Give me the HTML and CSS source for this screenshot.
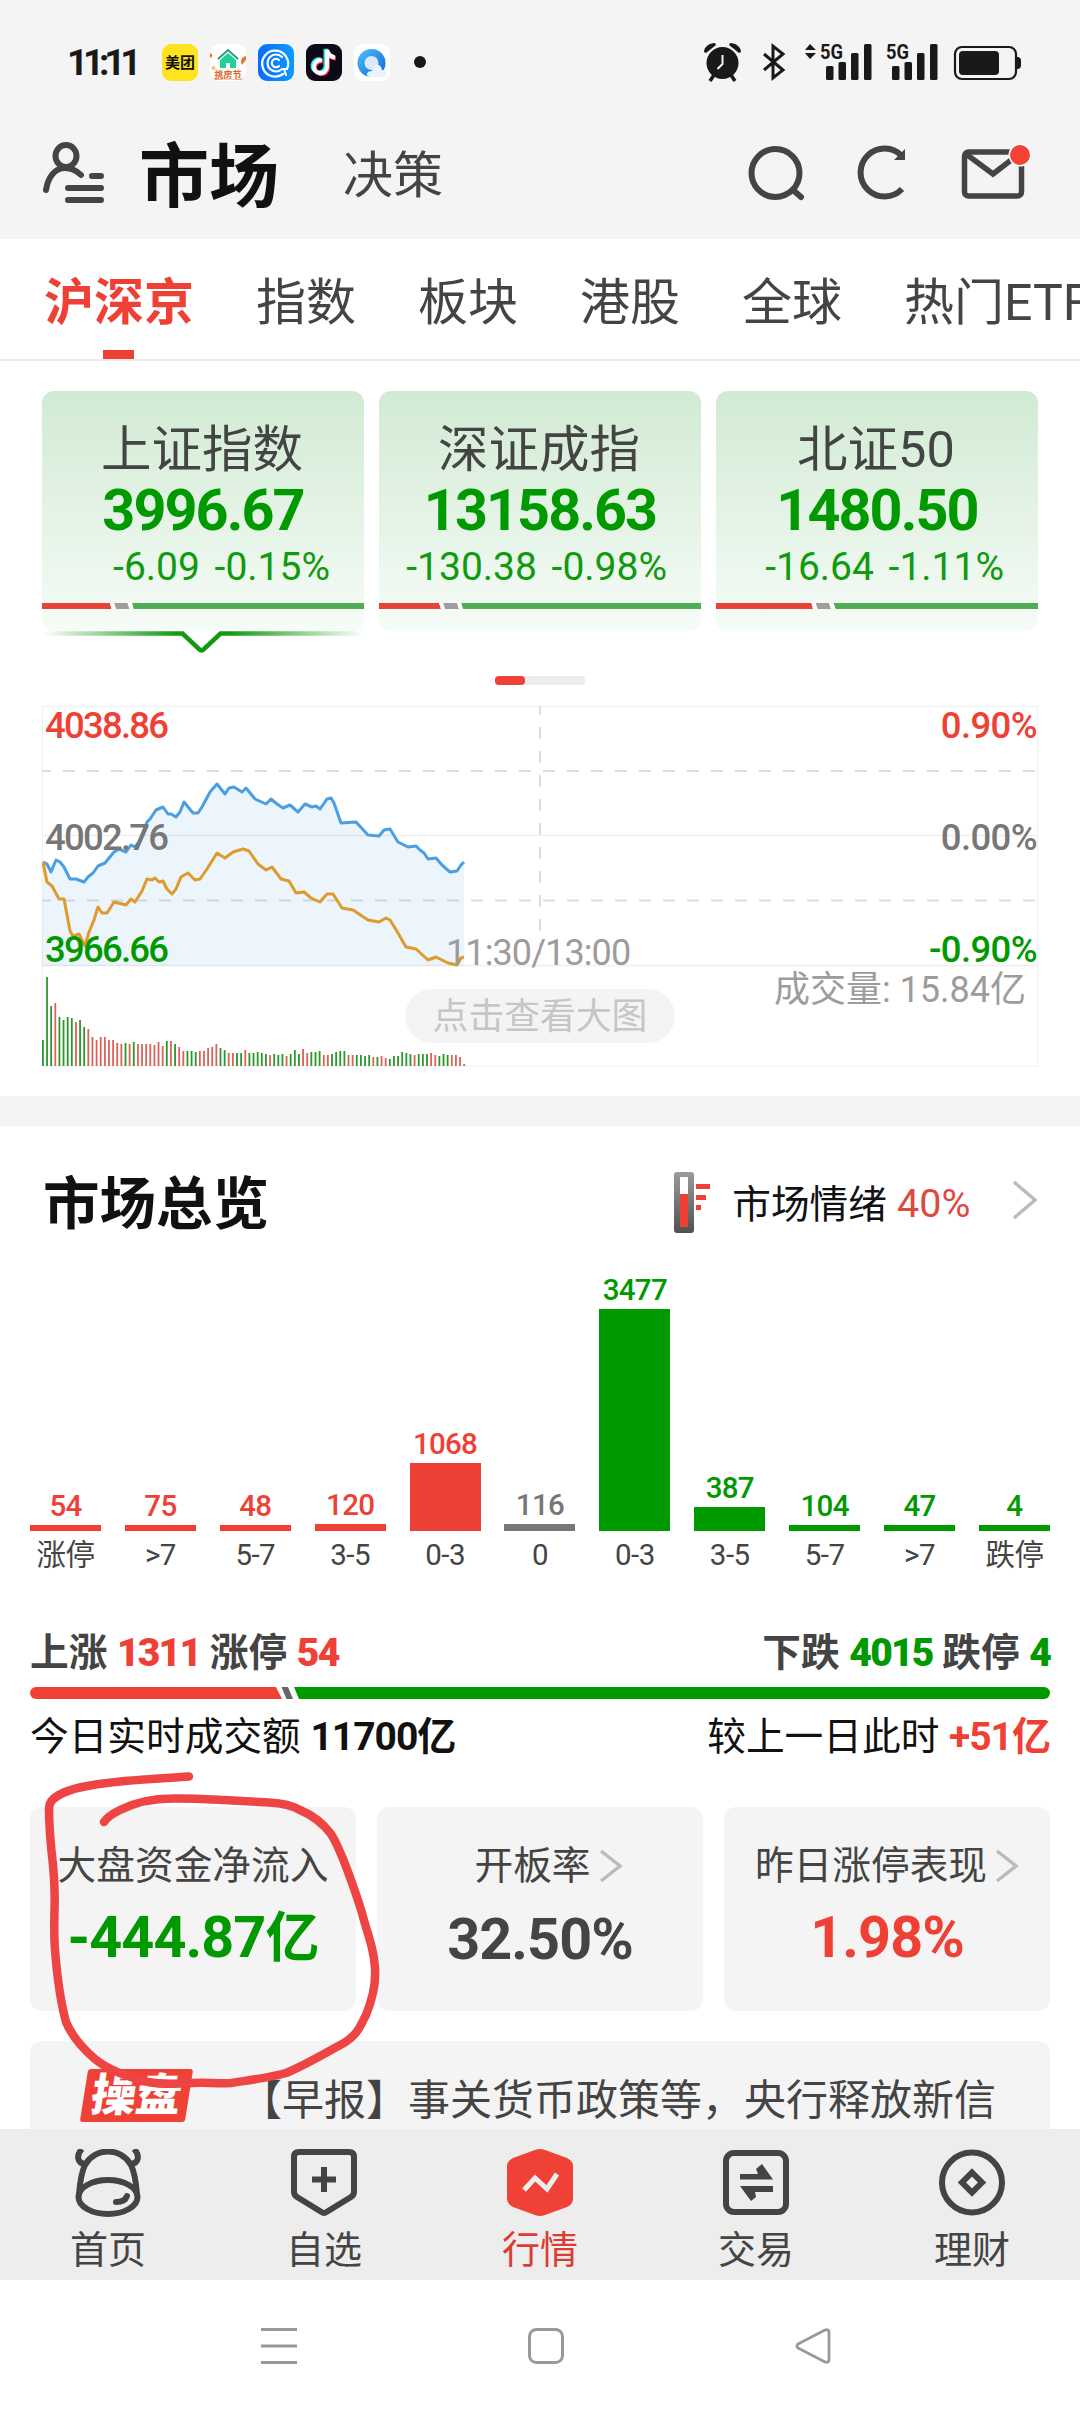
FILE: index.html
```html
<!DOCTYPE html>
<html lang="zh-CN">
<head>
    <meta charset="UTF-8">
    <meta name="viewport" content="width=device-width, initial-scale=1.0">
    <title>市场</title>
    <link rel="stylesheet" href="styles.css">
</head>
<body>

<!-- Status bar -->
<div class="status-bar">
    <span class="clock">11:11</span>
    <div class="app-icons">
        <span class="app app-meituan">美团</span>
        <span class="app app-house">
            <svg viewBox="0 0 36 37" width="36" height="37">
                <path d="M8 15L18 6l10 9" fill="none" stroke="#2a9d7c" stroke-width="2"/>
                <path d="M10 16l8-7 8 7v8h-6v-5h-4v5h-6z" fill="#20cf9a"/>
                <circle cx="3.500" cy="24" r="2" fill="#ffc069"/>
                <path d="M0 9c3 1 3 4 0 5z" fill="#e8792c"/>
                <path d="M36 12c-5 1-6 5-4 9l4-5z" fill="#e8792c"/>
                <path d="M3 34c8 2 22 2 30 0v2H5z" fill="#f0a36a"/>
                <text x="18" y="34" text-anchor="middle" class="house-text">挑房节</text>
            </svg>
        </span>
        <span class="app app-query">
            <svg viewBox="0 0 36 37" width="36" height="37" fill="none" stroke="#fff" stroke-width="2.200" stroke-linecap="round">
                <path d="M25 30a13 13 0 1 1 4-5l-3 0l2 6"/>
                <path d="M24 25a8.500 8.500 0 1 1 0-12"/>
                <path d="M21 22a4.200 4.200 0 1 1 0-6"/>
            </svg>
        </span>
        <span class="app app-music">
            <svg viewBox="0 0 36 37" width="36" height="37" fill="none" stroke-width="4">
                <path d="M16 16.500a6.500 6.500 0 1 0 5 6.500V6c1 5 4 7 8 7.500" stroke="#2af0ea" transform="translate(-1.500 -1)"/>
                <path d="M16 16.500a6.500 6.500 0 1 0 5 6.500V6c1 5 4 7 8 7.500" stroke="#fe2c55" transform="translate(1 1)"/>
                <path d="M16 16.500a6.500 6.500 0 1 0 5 6.500V6c1 5 4 7 8 7.500" stroke="#fff"/>
            </svg>
        </span>
        <span class="app app-browser">
            <svg viewBox="0 0 36 37" width="36" height="37">
                <defs>
                    <linearGradient id="ring" x1="0" x2="1" y1="0" y2="1">
                        <stop offset="0" stop-color="#45b6f5"/>
                        <stop offset="1" stop-color="#1273dc"/>
                    </linearGradient>
                </defs>
                <circle cx="17.500" cy="19" r="10.500" fill="#dbe9f8" stroke="url(#ring)" stroke-width="7"/>
                <path d="M16 33c-5-1-4-6 2-6 1-8 9-8 10-1 6 0 6 6 2 7z" fill="#e9f3fd"/>
            </svg>
        </span>
    </div>
    <span class="status-dot"></span>
    <svg class="status-icons" viewBox="700 40 324 44" width="324" height="44" fill="#191919">
        <!-- alarm -->
        <circle cx="722.500" cy="63" r="16"/>
        <path d="M704 52c0-5 5-9 11-9l1 2-10 8zM741 52c0-5-5-9-11-9l-1 2 10 8z"/>
        <path d="M714 75l-4 6M731 75l4 6" stroke="#191919" stroke-width="3.500"/>
        <path d="M722.500 55v9l-5 5" fill="none" stroke="#f4f4f4" stroke-width="2"/>
        <!-- bluetooth -->
        <path d="M764 54l19 16-10 8V46l10 8-19 16" fill="none" stroke="#191919" stroke-width="3"/>
        <!-- signals -->
        <path d="M805 50l5-6 6 6zM805 53l5 6 6-6z"/>
        <text x="820" y="59" class="net" textLength="23" lengthAdjust="spacingAndGlyphs">5G</text>
        <rect x="826" y="66" width="7.500" height="14" rx="1.500"/>
        <rect x="838.500" y="62" width="7.500" height="18" rx="1.500"/>
        <rect x="851" y="53" width="7.500" height="27" rx="1.500"/>
        <rect x="864" y="44" width="7.500" height="36" rx="1.500"/>
        <text x="886" y="59" class="net" textLength="23" lengthAdjust="spacingAndGlyphs">5G</text>
        <rect x="892" y="66" width="7.500" height="14" rx="1.500"/>
        <rect x="904.500" y="62" width="7.500" height="18" rx="1.500"/>
        <rect x="917" y="53" width="7.500" height="27" rx="1.500"/>
        <rect x="930" y="44" width="7.500" height="36" rx="1.500"/>
        <!-- battery -->
        <rect x="955" y="47" width="61" height="32" rx="7" fill="none" stroke="#191919" stroke-width="2.200"/>
        <rect x="959" y="51" width="40" height="24" rx="4"/>
        <path d="M1017 57h1.500q2.500 1 2.500 3v6q0 2-2.500 3H1017z"/>
    </svg>
</div>

<!-- Header -->
<header class="header">
    <svg class="contact" viewBox="0 0 62 64" width="62" height="64" fill="none" stroke="#444" stroke-width="6" stroke-linecap="round">
        <ellipse cx="23" cy="15" rx="10.500" ry="11"/>
        <path d="M3 49C5 36 12 27 22 27c8 0 13 4 16 7M49 35h9M25 47h33M25 59h33"/>
    </svg>
    <h1>市场</h1>
    <span class="decision">决策</span>
    <div class="header-icons">
        <svg viewBox="0 0 58 58" width="58" height="58" fill="none" stroke="#444" stroke-width="6">
            <circle cx="28.500" cy="29" r="24"/>
            <path d="M46 46l8 7" stroke-linecap="round"/>
        </svg>
        <svg viewBox="0 0 58 58" width="58" height="58" fill="none" stroke="#444" stroke-width="6">
            <path d="M46 45A24 24 0 1 1 46 12"/>
            <path d="M49 5v11H38z" fill="#444" stroke="none"/>
        </svg>
        <svg viewBox="0 0 72 58" width="72" height="58" fill="none" stroke="#444" stroke-width="5.500">
            <rect x="5.500" y="8" width="57" height="44" rx="4"/>
            <path d="M7 10l27 20 26-20"/>
            <circle cx="61" cy="11" r="11.500" fill="#fff" stroke="none"/>
            <circle cx="61" cy="11" r="10" fill="#f44336" stroke="none"/>
        </svg>
    </div>
</header>

<!-- Market tabs -->
<nav class="tabs">
    <span class="tab active">沪深京</span>
    <span class="tab">指数</span>
    <span class="tab">板块</span>
    <span class="tab">港股</span>
    <span class="tab">全球</span>
    <span class="tab">热门ETF</span>
</nav>

<!-- Index cards -->
<section class="index-cards">
    <div class="index-card">
        <div class="name">上证指数</div>
        <div class="value">3996.67</div>
        <div class="change">-6.09 <span>-0.15%</span></div>
        <svg class="ratio" viewBox="0 0 322 6" width="322" height="6">
            <path d="M0 0h68l1.500 6H0z" fill="#e94335"/>
            <path d="M72 0h13.500l2 6H74z" fill="#9e9e9e"/>
            <path d="M90 0h232v6H91.500z" fill="#51ad55"/>
            <path d="M68 0h4l2 6h-4.500zM85.500 0H90l1.500 6h-4z" fill="#fff"/>
        </svg>
        <svg class="pointer" viewBox="0 0 322 24" width="322" height="24">
            <defs>
                <linearGradient id="fade" x1="0" x2="322" y1="0" y2="0" gradientUnits="userSpaceOnUse">
                    <stop offset="0" stop-color="#109a10" stop-opacity="0"/>
                    <stop offset=".42" stop-color="#109a10"/>
                    <stop offset=".58" stop-color="#109a10"/>
                    <stop offset="1" stop-color="#109a10" stop-opacity="0"/>
                </linearGradient>
            </defs>
            <path d="M0 2.500h140.500L158 19q1.500 1 3 0l17.500-16.500H322" fill="none" stroke="url(#fade)" stroke-width="4.500"/>
        </svg>
    </div>
    <div class="index-card">
        <div class="name">深证成指</div>
        <div class="value">13158.63</div>
        <div class="change">-130.38 <span>-0.98%</span></div>
        <svg class="ratio" viewBox="0 0 322 6" width="322" height="6">
            <path d="M0 0h60l2 6H0z" fill="#e94335"/>
            <path d="M64 0h14l2 6H66z" fill="#9e9e9e"/>
            <path d="M82 0h240v6H84z" fill="#51ad55"/>
            <path d="M60 0h4l2 6h-4zM78 0h4l2 6h-4z" fill="#fff"/>
        </svg>
    </div>
    <div class="index-card">
        <div class="name">北证50</div>
        <div class="value">1480.50</div>
        <div class="change">-16.64 <span>-1.11%</span></div>
        <svg class="ratio" viewBox="0 0 322 6" width="322" height="6">
            <path d="M0 0h95.500l1.500 6H0z" fill="#e94335"/>
            <path d="M99.500 0H113l2 6h-13.500z" fill="#9e9e9e"/>
            <path d="M117.500 0H322v6H119.500z" fill="#51ad55"/>
            <path d="M95.500 0h4l2 6H97zM113 0h4.500l2 6H115z" fill="#fff"/>
        </svg>
    </div>
</section>
<div class="pager"><span></span></div>

<!-- Intraday chart -->
<section class="chart">
    <svg id="trend" viewBox="0 0 996 361" width="996" height="361">
        <g fill="none" stroke="#efefef">
            <rect x=".5" y=".5" width="995" height="359.500"/>
            <path d="M0 129.500h996M0 259.500h996" stroke-width="1.500"/>
            <path d="M-3 65h999M-3 194.500h999" stroke="#dedede" stroke-width="2" stroke-dasharray="12 12"/>
            <path d="M498 -3v262" stroke="#dedede" stroke-width="2" stroke-dasharray="12 12"/>
        </g>
        <polygon id="area" fill="#4a9fe0" fill-opacity=".1"/>
        <polyline id="price" fill="none" stroke="#4b9fe0" stroke-width="3" stroke-linejoin="round"/>
        <polyline id="average" fill="none" stroke="#de9a2c" stroke-width="3" stroke-linejoin="round"/>
        <g id="volume"></g>
    </svg>
    <div class="axis axis-left"><span class="up">4038.86</span><span>4002.76</span><span class="down">3966.66</span></div>
    <div class="axis axis-right"><span class="up">0.90%</span><span>0.00%</span><span class="down">-0.90%</span></div>
    <span class="chart-time">11:30/13:00</span>
    <span class="chart-volume">成交量: 15.84亿</span>
    <span class="chart-open">点击查看大图</span>
</section>

<!-- Market overview -->
<section class="overview">
    <div class="overview-head">
        <h2>市场总览</h2>
        <svg viewBox="0 0 38 62" width="38" height="62">
            <defs>
                <linearGradient id="tube" x1="0" x2="0" y1="0" y2="1">
                    <stop offset="0" stop-color="#9b9b9b"/>
                    <stop offset="1" stop-color="#505050"/>
                </linearGradient>
            </defs>
            <rect x="0" y="0" width="20" height="61" rx="3" fill="url(#tube)"/>
            <rect x="6" y="5" width="8" height="18" fill="#fff"/>
            <rect x="6" y="22" width="8" height="33" fill="#ee4034"/>
            <path d="M22 12h14v5H22zM22 23h10v5H22zM22 33h5v5h-5z" fill="#ee4034"/>
        </svg>
        <span class="mood">市场情绪</span>
        <span class="mood-value">40%</span>
        <svg viewBox="0 0 28 40" width="28" height="40" fill="none" stroke="#bbb" stroke-width="3.500">
            <path d="M3 2l21 18L3 38"/>
        </svg>
    </div>

    <div class="bars" id="bars"></div>

    <div class="row row-bold">
        <div>上涨 <b class="up">1311</b> 涨停 <b class="up">54</b></div>
        <div>下跌 <b class="down">4015</b> 跌停 <b class="down">4</b></div>
    </div>
    <svg class="breadth" viewBox="0 0 1020 12" width="1020" height="12">
        <path d="M6 0h240l6 12H6A6 6 0 0 1 6 0z" fill="#ef4136"/>
        <path d="M251.500 0h6.500l5 12h-6.500z" fill="#666"/>
        <path d="M264 0h750a6 6 0 0 1 0 12H269z" fill="#009900"/>
    </svg>
    <div class="row row-total">
        <div>今日实时成交额 <b>11700亿</b></div>
        <div>较上一日此时 <b class="up">+51亿</b></div>
    </div>

    <div class="stats">
        <div class="stat">
            <div class="stat-name">大盘资金净流入</div>
            <div class="stat-value down">-444.87<small>亿</small></div>
        </div>
        <div class="stat">
            <div class="stat-name stat-short">开板率
                <svg viewBox="0 0 24 34" width="24" height="34" fill="none" stroke="#bbb" stroke-width="3.500"><path d="M2 2l19 15L2 32"/></svg>
            </div>
            <div class="stat-value stat-flat">32.50%</div>
        </div>
        <div class="stat">
            <div class="stat-name">昨日涨停表现
                <svg viewBox="0 0 24 34" width="24" height="34" fill="none" stroke="#bbb" stroke-width="3.500"><path d="M2 2l19 15L2 32"/></svg>
            </div>
            <div class="stat-value up">1.98%</div>
        </div>
    </div>

    <div class="news">
        <span class="news-tag"><span>操盘</span></span>
        <span class="news-text">【早报】事关货币政策等，央行释放新信</span>
    </div>

    <!-- Hand drawn mark -->
    <svg class="mark" viewBox="30 1760 370 340" width="370" height="340">
        <path d="M189 1776.500C155 1779 120 1780 93 1785C67 1789 49 1797 49 1808C49 1828 51 1848 53 1865C55 1885 55 1895 54.500 1910C54 1930 54 1937 55 1950C57 1975 60 2000 66 2022C72 2036 82 2048 95 2059C107 2069 128 2077 148 2082C163 2085 178 2084 193 2083C206 2082 218 2084 231 2083C250 2080 268 2078 286 2073C306 2065 325 2053 344 2043C358 2034 359 2028 366 2015C373 1998 376 1983 375 1968C374 1952 370 1940 365 1924C360 1904 354 1888 348 1872C342 1856 338 1845 331 1834C322 1822 312 1815 300 1810C290 1804 279 1803 269 1802.500L224 1800C205 1799 189 1798 172 1798.500C158 1798.500 138 1801 120 1810C112 1814 107 1817 104 1822" fill="none" stroke="#ee4444" stroke-width="8.500" stroke-linecap="round" stroke-linejoin="round"/>
    </svg>
</section>

<!-- Bottom tab bar -->
<footer class="tab-bar">
    <div class="tab-item">
        <svg viewBox="0 0 66 68" width="66" height="68" fill="none" stroke="#444" stroke-width="6">
            <path d="M4 46C5 32 6 24 10 16C20-2 46-2 56 16C60 24 61 32 62 46"/>
            <path d="M10 15C2 14 1 6 7 0M56 15C64 14 65 6 59 0"/>
            <ellipse cx="33" cy="48" rx="29.500" ry="17"/>
            <path d="M41 53q9 0 11-6" stroke-linecap="round"/>
        </svg>
        <span>首页</span>
    </div>
    <div class="tab-item">
        <svg viewBox="0 0 66 68" width="66" height="68" fill="none" stroke="#444" stroke-width="6" stroke-linejoin="round">
            <path d="M8 3h50q5 0 5 5v35q0 3-3 5L35.500 63q-2.500 2-5 0L6 48q-3-2-3-5V8q0-5 5-5z"/>
            <path d="M33 18v25M21 30.500h24"/>
        </svg>
        <span>自选</span>
    </div>
    <div class="tab-item current">
        <svg viewBox="0 0 66 68" width="66" height="68">
            <path d="M28 1q5-2 10 0l22 8q6 3 6 8v33q0 5-6 8l-22 8q-5 2-10 0L6 58q-6-3-6-8V17q0-5 6-8z" fill="#ef4136"/>
            <path d="M17 41l11-12 12 11 10-15" fill="none" stroke="#eee" stroke-width="5"/>
        </svg>
        <span>行情</span>
    </div>
    <div class="tab-item">
        <svg viewBox="0 0 66 68" width="66" height="68" fill="none" stroke="#444" stroke-width="6">
            <rect x="3" y="4" width="60" height="59" rx="8"/>
            <path d="M17 30.500V25h18l-2-5 6-5 11 15.500zM50 37v6H32l1 5-5 4-11-15z" fill="#444" stroke="none"/>
        </svg>
        <span>交易</span>
    </div>
    <div class="tab-item">
        <svg viewBox="0 0 66 68" width="66" height="68" fill="none" stroke="#444" stroke-width="6">
            <circle cx="33" cy="33.500" r="30"/>
            <path d="M33 23.500l10 10-10 10-10-10z"/>
        </svg>
        <span>理财</span>
    </div>
</footer>

<!-- System navigation -->
<div class="system-nav">
    <svg viewBox="0 0 36 36" width="36" height="36" stroke="#999" stroke-width="3"><path d="M0 1.500h36M0 18h36M0 34.500h36"/></svg>
    <svg viewBox="0 0 36 36" width="36" height="36" fill="none" stroke="#999" stroke-width="3"><rect x="1.500" y="1.500" width="33" height="33" rx="7"/></svg>
    <svg viewBox="0 0 36 36" width="36" height="36" fill="none" stroke="#999" stroke-width="2.800" stroke-linejoin="round"><path d="M30 2q4-1 4 2v28q0 3-4 2L3 20q-2-2 0-4z"/></svg>
</div>

<script>
    // Points of the intraday lines, x,y inside the 996px wide chart
    const price = '1,156 5,158 9,166 14,154 18,156 22,161 28,173 34,173 42,176 46,171 51,167 56,160 63,157 72,146 77,143 84,146 89,139 93,141 97,136 105,116 108,113 114,104 121,101 126,108 129,108 134,111 138,106 142,96 151,107 156,107 160,101 168,86 175,78 183,88 187,82 192,81 200,86 204,82 213,93 224,98 229,93 235,98 241,102 248,99 256,106 263,98 270,101 274,100 278,103 285,93 289,92 292,97 299,117 314,116 326,129 337,130 342,124 348,123 356,136 366,141 374,140 378,144 382,147 386,153 394,152 400,159 408,166 415,165 419,159 422,156';
    const average = '1,156 5,176 10,180 17,193 22,193 28,225 31,230 37,228 43,240 47,226 52,214 56,201 60,207 65,207 72,196 84,199 89,193 93,196 100,185 105,173 110,174 113,172 117,176 121,175 125,183 130,188 134,183 139,171 146,167 153,174 158,173 165,163 175,147 183,152 191,146 201,143 207,145 216,158 224,164 230,161 239,173 247,175 254,187 262,186 269,192 278,196 285,188 291,188 300,202 311,204 326,214 337,216 344,212 348,214 356,227 364,241 374,243 386,254 394,251 406,257 415,259 419,252 422,251';
    document.getElementById('price').setAttribute('points', price);
    document.getElementById('average').setAttribute('points', average);
    document.getElementById('area').setAttribute('points', `0,260 ${price} 422,260`);

    // Volume per minute, g = falling, r = rising
    const volume = 'g26 g89 g60 r63 g49 g46 g49 g48 r44 g46 g39 r37 r29 r26 r29 r29 r26 r26 r23 r22 g23 r22 g24 r22 r22 r22 r22 r21 r24 r20 g25 r25 g22 r19 r15 g15 g15 g14 r15 r15 r18 r19 r22 g18 g16 r13 r13 g13 g13 r16 g13 g13 g14 g13 g12 r11 g12 g11 g12 r10 g12 g16 g12 r17 r13 g14 g14 g15 r11 r11 g12 g14 g15 g15 r11 r11 g11 g11 g10 g11 r9 g9 r10 r8 g7 g10 g10 g14 g13 g12 r11 g12 g12 g12 r13 r11 g10 g12 g11 r11 r11 r9 r2';
    document.getElementById('volume').innerHTML = volume.split(' ').map((bar, i) => {
        const height = +bar.slice(1);
        const color = bar[0] === 'g' ? '#2b972b' : '#dc625c';
        return `<rect x="${(i * 4.13).toFixed(2)}" y="${360 - height}" width="1.800" height="${height}" fill="${color}"/>`;
    }).join('');

    // Number of stocks per change range
    const ranges = [
        ['涨停', 54, 6, 'up'], ['>7', 75, 6, 'up'], ['5-7', 48, 6, 'up'], ['3-5', 120, 7, 'up'],
        ['0-3', 1068, 68, 'up'], ['0', 116, 7, 'flat'], ['0-3', 3477, 222, 'down'], ['3-5', 387, 24, 'down'],
        ['5-7', 104, 6, 'down'], ['>7', 47, 6, 'down'], ['跌停', 4, 6, 'down']
    ];
    document.getElementById('bars').innerHTML = ranges.map(([label, count, height, type]) => `
        <div class="bar ${type}">
            <span class="bar-count">${count}</span>
            <span class="bar-fill" style="height: ${height}px"></span>
            <span class="bar-label">${label}</span>
        </div>`).join('');
</script>

</body>
</html>
```
FILE: styles.css
```css
* { box-sizing: border-box; }
body { margin: 0; width: 1080px; height: 2412px; overflow: hidden; position: relative; background: #fff; color: #444; font-family: Roboto, "Noto Sans CJK SC", sans-serif; display: flex; flex-direction: column; }
body > * { flex-shrink: 0; }
svg { display: block; flex-shrink: 0; }
h1, h2 { margin: 0; color: #111; }
.up { color: #ee4034; }
.down { color: #009900; }
.flat { color: #777; }

/* Status bar */
.status-bar { height: 124px; background: #f4f4f4; display: flex; align-items: center; padding: 0 56px 0 67px; }
.clock { width: 95px; font-size: 37px; font-weight: 700; color: #191919; letter-spacing: -5.200px; white-space: nowrap; }
.app-icons { display: flex; gap: 12px; }
.app { width: 36px; height: 37px; border-radius: 9px; overflow: hidden; background: #fff; }
.app-meituan { background: #ffe31f; color: #111; font-size: 15px; font-weight: 700; line-height: 38px; text-align: center; }
.house-text { font-size: 9px; font-weight: 700; fill: #d9692c; }
.app-query { background: linear-gradient(90deg, #0a6cff, #0a9bff); }
.app-music { background: #0c0a18; }
.status-dot { width: 12px; height: 12px; border-radius: 50%; background: #191919; margin-left: 24px; }
.status-icons { margin-left: auto; }
.net { font-size: 21px; font-weight: 700; }

/* Header */
.header { height: 115px; background: #f4f4f4; display: flex; align-items: center; padding: 0 49px 17px 43px; }
h1 { margin: 10px 0 0 34px; font-size: 70px; line-height: 90px; }
.decision { margin: 5px 0 0 64px; font-size: 50px; line-height: 70px; }
.header-icons { margin-left: auto; display: flex; }
.header-icons svg + svg { margin-left: 51px; }
.header-icons svg:last-child { margin-left: 45px; }

/* Tabs */
.tabs { height: 122px; border-bottom: 2px solid #ececec; display: flex; gap: 62px; padding-left: 44px; font-size: 50px; line-height: 129px; white-space: nowrap; overflow: hidden; }
.tab { position: relative; flex-shrink: 0; height: 120px; }
.tab.active { color: #ee4034; font-weight: 700; }
.tab.active::after { content: ""; position: absolute; left: 59px; bottom: 0; width: 31px; height: 9px; background: #ee4034; }

/* Index cards */
.index-cards { display: flex; gap: 15px; padding: 30px 42px 0; }
.index-card { position: relative; width: 322px; height: 240px; border-radius: 12px; background: linear-gradient(#d1ead3, #f6fcf7); text-align: center; padding-top: 28px; white-space: nowrap; }
.name { font-size: 50.500px; line-height: 62px; margin-left: -2px; }
.value { font-size: 57.500px; line-height: 60px; font-weight: 700; color: #009900; letter-spacing: -1.900px; }
.change { font-size: 39px; line-height: 52px; color: #109a10; text-align: right; padding-right: 34px; }
.change span { margin-left: 5px; }
.ratio { margin-top: 10px; }
.pointer { position: absolute; left: 0; top: 240px; }
.pager { width: 90px; height: 9px; border-radius: 4px; background: #ececec; margin: 45px 0 0 495px; }
.pager span { display: block; width: 30px; height: 9px; border-radius: 4px; background: #ee4034; }

/* Intraday chart */
.chart { position: relative; height: 361px; margin: 21px 42px 0; }
.axis { position: absolute; top: -1px; height: 260px; display: flex; flex-direction: column; gap: 70px; font-size: 36.500px; line-height: 42px; font-weight: 500; color: #777; }
.axis-left { left: 3px; letter-spacing: -1.750px; }
.axis-right { right: 1px; text-align: right; letter-spacing: -.600px; }
.chart-time { position: absolute; left: 404px; top: 226px; font-size: 36px; line-height: 42px; color: #9c9c9c; letter-spacing: -.900px; }
.chart-volume { position: absolute; right: 12px; top: 263px; font-size: 36px; line-height: 42px; color: #9c9c9c; }
.chart-open { position: absolute; left: 363px; top: 283px; width: 270px; height: 54px; border-radius: 27px; background: #f4f4f4; color: #c6c6c6; font-size: 35.800px; line-height: 56px; text-align: center; }

/* Overview */
.overview { margin-top: 29px; height: 1033px; border-top: 30px solid #f4f4f4; padding: 0 30px; overflow: hidden; }
.overview-head { height: 154px; display: flex; align-items: center; padding: 0 11px 0 13px; }
h2 { font-size: 56.500px; line-height: 80px; margin-right: auto; padding-top: 3px; }
.mood { margin-left: 20px; font-size: 38.700px; color: #111; padding-bottom: 4px; }
.mood-value { margin-left: 10px; width: 76px; font-size: 39.500px; color: #dc4a3e; }
.overview-head svg:last-child { margin: 0 0 6px 38px; }
.bars { height: 302px; display: flex; justify-content: space-between; align-items: flex-end; }
.bar { width: 71px; display: flex; flex-direction: column; align-items: center; font-size: 29.500px; }
.bar-count { line-height: 30px; margin-bottom: 4px; font-weight: 500; letter-spacing: -.700px; }
.bar-fill { width: 71px; background: currentColor; }
.bar-label { line-height: 36px; margin-top: 6px; height: 45px; color: #444; letter-spacing: -.500px; white-space: nowrap; }
.row { display: flex; justify-content: space-between; font-size: 38.700px; line-height: 50px; white-space: nowrap; }
.row b { font-size: 39px; letter-spacing: -1px; }
.row-bold { margin-top: 46px; font-weight: 700; }
.row-bold b { letter-spacing: -1.800px; }
.breadth { margin-top: 9px; }
.row-total { margin-top: 13px; color: #111; }

.stats { display: flex; gap: 21px; margin-top: 45px; }
.stat { width: 326px; height: 204px; border-radius: 12px; background: #f4f4f4; padding-top: 34px; text-align: center; white-space: nowrap; }
.stat-name { display: flex; justify-content: center; align-items: center; gap: 8px; font-size: 38.700px; line-height: 52px; height: 50px; }
.stat-short { padding-left: 17px; }
.stat-value { font-size: 57.500px; line-height: 94px; font-weight: 700; letter-spacing: -.900px; }
.stat-flat { line-height: 98px; }
.stat-value small { font-size: 54px; }

.news { height: 120px; margin-top: 30px; border-radius: 12px; background: #f4f4f4; display: flex; padding: 28px 0 0 54px; }
.news-tag { width: 105px; height: 53px; background: #ef4136; border-radius: 3px; transform: skewX(-9deg); color: #fff; font-size: 45px; font-weight: 900; line-height: 53px; text-align: center; }
.news-text { margin-left: 51px; font-size: 42px; line-height: 63px; white-space: nowrap; }
.mark { position: absolute; left: 30px; top: 1760px; }

/* Bottom bars */
.tab-bar { height: 151px; background: #ededed; display: flex; }
.tab-item { width: 216px; padding-top: 20px; display: flex; flex-direction: column; align-items: center; font-size: 38px; line-height: 50px; }
.tab-item span { margin-top: 8px; }
.current { color: #dc3c34; }
.system-nav { height: 132px; padding: 48px 249px 0 261px; display: flex; justify-content: space-between; background: #fff; }
```
